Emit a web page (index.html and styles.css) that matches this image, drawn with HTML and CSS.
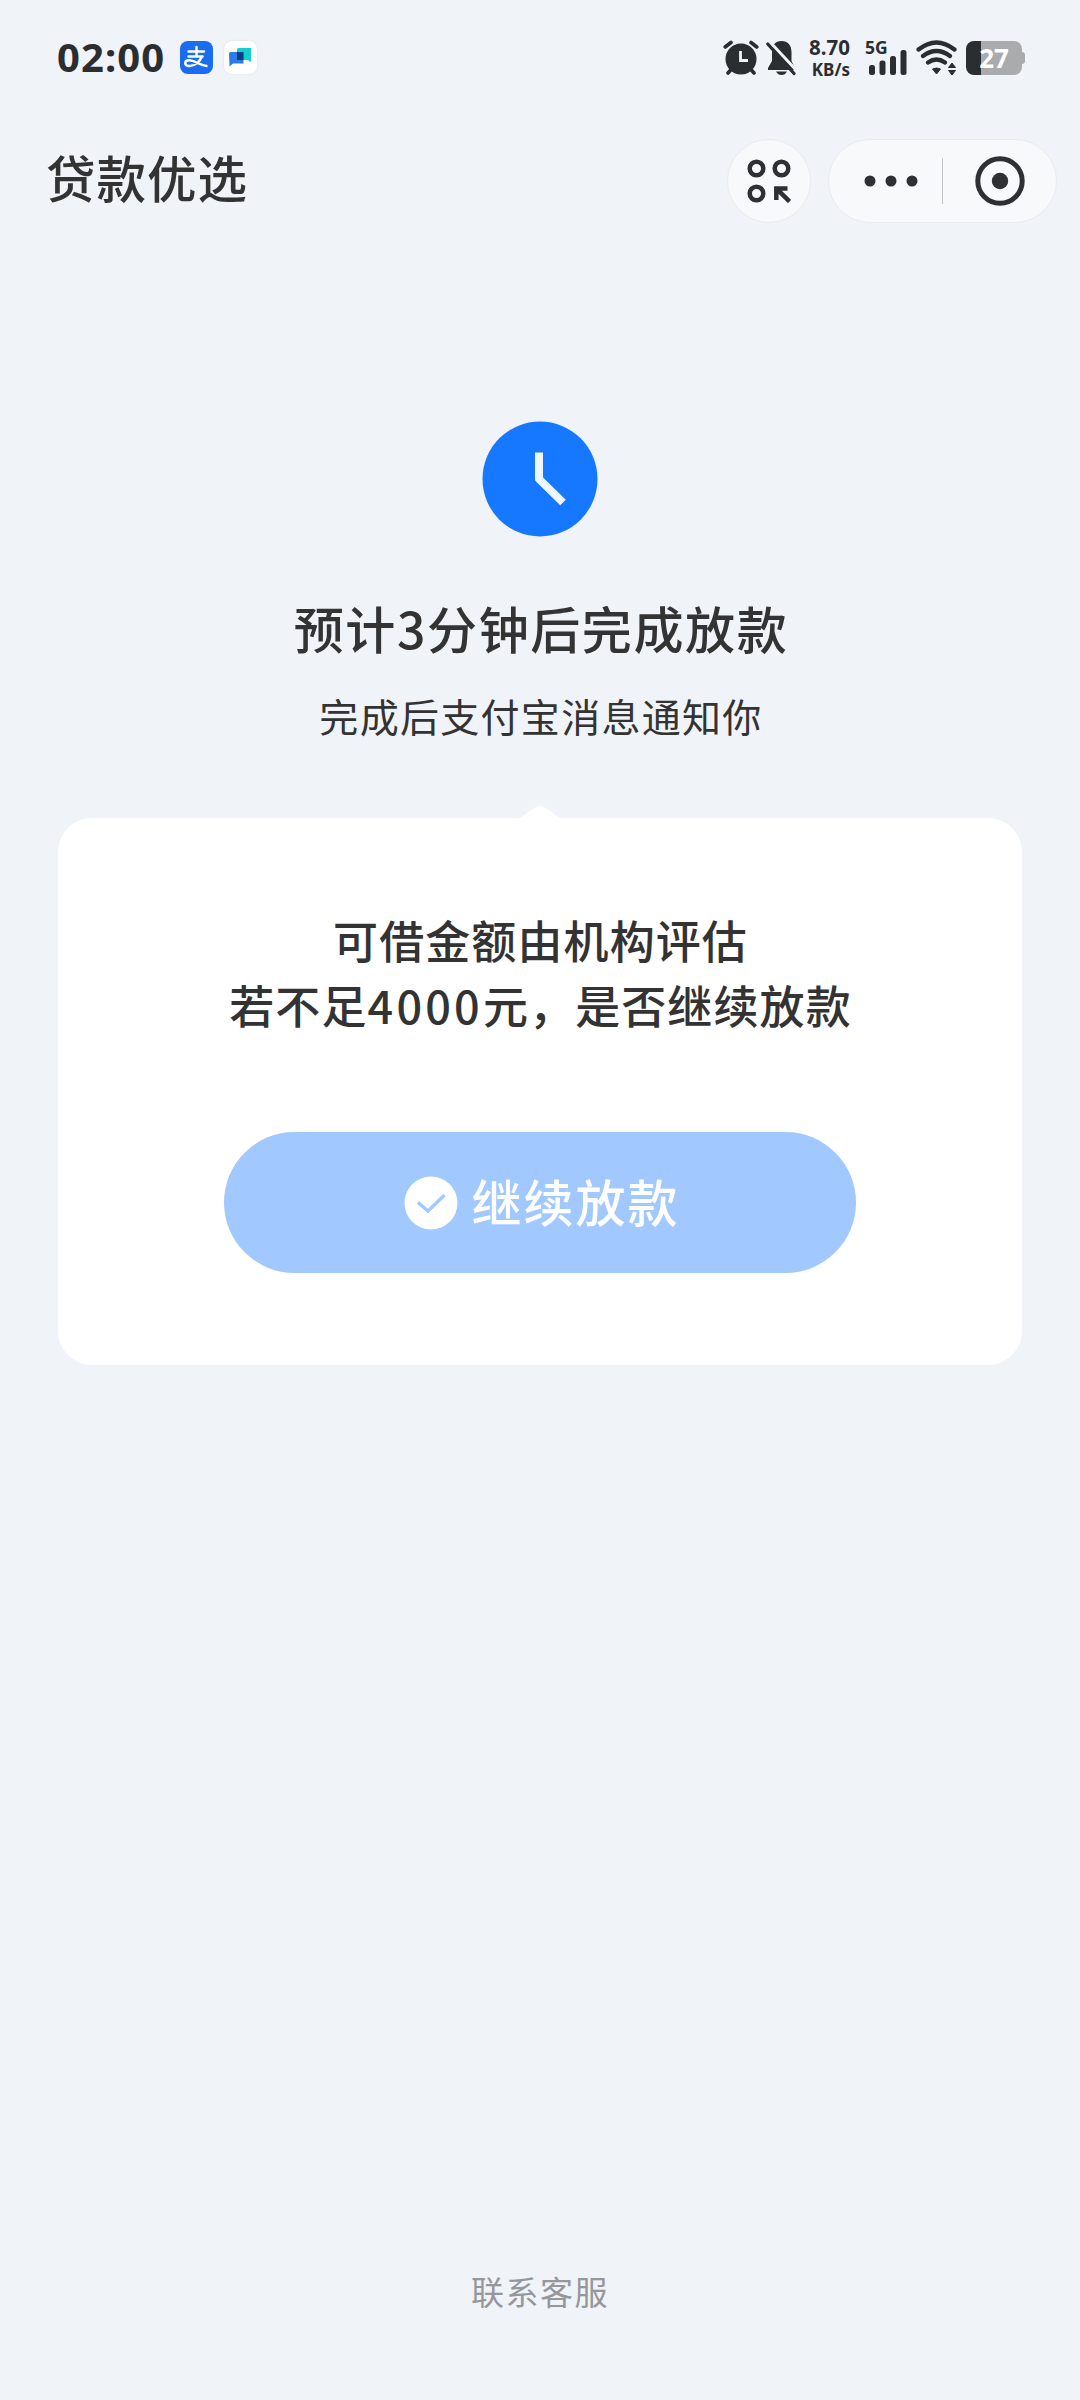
FILE: index.html
```html
<!DOCTYPE html>
<html lang="zh-CN">
<head>
<meta charset="utf-8">
<title>贷款优选</title>
<link rel="stylesheet" href="styles.css">
</head>
<body>
<div class="screen">
  <div class="status">
    <span class="time">02:00</span>
    <span class="app app-pay">
      <svg width="33" height="33" viewBox="0 0 33 33" fill="none" stroke="#fff" stroke-linecap="round">
        <path d="M8.500 10.500H24M16.500 6V15M8.500 15.500H22.500" stroke-width="2.400"/>
        <path d="M22 15.500C20 20 15 25.500 9 25C4 24.500 4 19.500 9 19.300C14 19.200 19 23.500 26.500 25" stroke-width="2.500"/>
      </svg>
    </span>
    <span class="app app-chat">
      <svg width="33" height="33" viewBox="0 0 33 33">
        <path d="M13 8.500Q13 7 14.500 7H27V21L23.500 19H13Z" fill="#12cfd0"/>
        <path d="M5 12.500Q5 11 6.500 11H19.500V22.500H9L5.500 25.500Z" fill="#2b7ce9"/>
        <path d="M13 11H19.500V19H13Z" fill="#063f87"/>
      </svg>
    </span>
    <svg class="alarm" width="36" height="36" viewBox="0 0 36 36">
      <g stroke="#2b2e30" stroke-width="3.600" stroke-linecap="round" fill="none">
        <path d="M2.200 7L8 2.500M28 2.500L33.800 7M5 33L9 28.500M31 33L27 28.500"/>
      </g>
      <circle cx="18" cy="19" r="15.500" fill="#2b2e30"/>
      <path d="M17.500 11V20.500H25" stroke="#f0f3f8" stroke-width="2.800" fill="none"/>
    </svg>
    <svg class="bell" width="31" height="36" viewBox="0 0 31 36">
      <path d="M15.500 1C22 1 25.500 5.500 25.500 12V21L29 28V30H2V28L6 21V12C6 5.500 9 1 15.500 1Z" fill="#2b2e30"/>
      <path d="M10 31.500H21Q19 35 15.500 35Q12 35 10 31.500Z" fill="#2b2e30"/>
      <path d="M3.500 1.500L31 31" stroke="#f0f3f8" stroke-width="3"/>
      <path d="M1.800 4L28 33.500" stroke="#2b2e30" stroke-width="3.200" stroke-linecap="round"/>
    </svg>
    <span class="rate"><b>8.70</b><b class="unit">KB/s</b></span>
    <span class="signal">
      <b>5G</b>
      <svg width="39" height="34" viewBox="0 0 39 34" fill="#2b2e30">
        <rect x="1" y="24" width="6" height="10" rx="2.500"/><rect x="11.500" y="19.500" width="6" height="14.500" rx="2.500"/>
        <rect x="22" y="15" width="6" height="19" rx="2.500"/><rect x="32.500" y="9" width="6" height="25" rx="2.500"/>
      </svg>
    </span>
    <svg class="wifi" width="42" height="36" viewBox="0 0 42 36">
      <g fill="none" stroke="#2b2e30" stroke-width="4.200" stroke-linecap="round">
        <path d="M2.500 9.500Q20.500-4.500 38.500 9.500M7 16Q20.500 6 34 16M12 22.500Q20.500 16.500 29 22.500"/>
      </g>
      <path d="M16.500 29Q20.500 27 24.500 29L20.500 34ZM32.500 27.500L36 23L39.500 27.500ZM32.500 30.500L36 35L39.500 30.500Z" fill="#2b2e30" stroke="#2b2e30" stroke-linejoin="round"/>
    </svg>
    <span class="battery"><b>27</b></span>
  </div>

  <div class="nav">
    <h1 class="nav-title">贷款优选</h1>
    <div class="nav-round">
      <svg width="44" height="44" viewBox="0 0 44 44" fill="none" stroke="#2e3033" stroke-width="4.500">
        <circle cx="9.500" cy="9.500" r="6.800"/><circle cx="34.500" cy="9.500" r="6.800"/><circle cx="9.500" cy="34.500" r="6.800"/>
        <path d="M40.500 29.500H29.300V41M29.500 29.700L42.500 42.500"/>
      </svg>
    </div>
    <div class="nav-pill">
      <svg class="dots" width="54" height="12" viewBox="0 0 54 12" fill="#2e3033">
        <circle cx="6" cy="6" r="5.500"/><circle cx="27" cy="6" r="5.500"/><circle cx="48" cy="6" r="5.500"/>
      </svg>
      <i class="divider"></i>
      <svg class="close" width="50" height="50" viewBox="0 0 50 50">
        <circle cx="25" cy="25" r="22.200" fill="none" stroke="#2e3033" stroke-width="5"/><circle cx="25" cy="25" r="8.200" fill="#2e3033"/>
      </svg>
    </div>
  </div>

  <div class="result">
    <svg class="clock" width="116" height="116" viewBox="0 0 116 116">
      <circle cx="58" cy="58" r="57.500" fill="#1677ff"/>
      <path d="M57 31.500V58L81 81.500" fill="none" stroke="#f0f6ff" stroke-width="8" stroke-linejoin="round"/>
    </svg>
    <h2 class="headline">预计3分钟后完成放款</h2>
    <p class="subline">完成后支付宝消息通知你</p>
  </div>

  <div class="card">
    <svg class="notch" width="52" height="13" viewBox="0 0 52 13"><path d="M0 13C7 13 9 9 21 1.500Q26-1.500 31 1.500C43 9 45 13 52 13Z" fill="#fff"/></svg>
    <p class="question">可借金额由机构评估<br>若不足<span class="amount">4000</span>元，是否继续放款</p>
    <button class="confirm">
      <svg width="54" height="54" viewBox="0 0 54 54">
        <circle cx="27" cy="27" r="26.500" fill="#fff"/>
        <path d="M14 26.500L24 35L40.500 19" fill="none" stroke="#a1c8ff" stroke-width="3.200"/>
      </svg>
      <span class="confirm-label">继续放款</span>
    </button>
  </div>

  <a class="service">联系客服</a>
</div>
</body>
</html>
```
FILE: styles.css
```css
* { box-sizing: border-box; margin: 0; padding: 0; }
body {
  background: #f0f3f8;
  color: #333;
  font-family: "Noto Sans CJK SC", sans-serif;
}
svg { display: block; flex: none; }
.screen {
  width: 1080px;
  height: 2400px;
  display: flex;
  flex-direction: column;
  overflow: hidden;
}

/* status bar */
.status {
  height: 116px;
  padding: 0 56px 0 57px;
  display: flex;
  align-items: center;
  color: #2b2e30;
  font-family: "Noto Sans", sans-serif;
}
.time { width: 123px; margin-top: -2px; font-size: 40px; font-weight: 700; letter-spacing: 1.1px; line-height: 40px; white-space: nowrap; }
.app { width: 33px; height: 33px; border-radius: 8px; flex: none; margin-top: -1px; }
.app-pay { background: #1a6cf0; }
.app-chat { background: #fff; margin-left: 11px; box-shadow: 0 0 2px #d8dade; }
.alarm { margin-left: auto; margin-top: -1px; }
.bell { margin: -1px 0 0 7px; }
.rate { width: 42px; margin: -1px 0 0 11px; display: flex; flex-direction: column; align-items: flex-end; font-size: 20.500px; line-height: 24px; white-space: nowrap; }
.rate .unit { font-size: 17px; line-height: 22px; }
.signal { position: relative; margin: -1px 0 0 16px; padding-left: 2px; }
.signal b { position: absolute; left: -1px; top: -4px; font-size: 17.500px; line-height: 20px; }
.wifi { margin: -1px 0 0 9px; }
.battery {
  width: 56px;
  height: 34px;
  margin: -1px 2px 0 8px;
  border-radius: 8px;
  background: linear-gradient(90deg, #2b2e30 15px, #a9abad 15px);
  position: relative;
  display: flex;
  align-items: center;
  justify-content: center;
}
.battery::after { content: ""; position: absolute; right: -3px; top: 11px; width: 4px; height: 12px; border-radius: 0 3px 3px 0; background: #a9abad; }
.battery b { color: #fff; font-size: 26px; line-height: 34px; }

/* title bar */
.nav { height: 129px; padding: 0 23px 0 46px; display: flex; align-items: center; }
.nav-title { font-size: 49.500px; font-weight: 500; letter-spacing: 1px; line-height: 72px; margin: -7px auto 0 0; }
.nav-round, .nav-pill { height: 84px; background: #f8f9fb; border: 1px solid #e9ebef; display: flex; align-items: center; }
.nav-round { width: 84px; border-radius: 50%; justify-content: center; }
.nav-pill { width: 229px; margin-left: 17px; border-radius: 42px; padding-left: 35px; }
.divider { width: 1px; height: 46px; margin-left: 24px; background: #c2c4c7; }
.close { margin-left: 32px; }

/* loan progress */
.result { display: flex; flex-direction: column; align-items: center; padding-top: 176px; height: 573px; }
.headline { margin-top: 53px; font-size: 50px; font-weight: 500; letter-spacing: 1.600px; line-height: 74px; }
.subline { margin-top: 23px; font-size: 39px; letter-spacing: 1.300px; line-height: 56px; }
.headline, .subline { padding-left: 2px; }

.card {
  position: relative;
  height: 547px;
  margin: 0 58px;
  padding-top: 89px;
  border-radius: 34px;
  background: #fff;
  display: flex;
  flex-direction: column;
  align-items: center;
}
.notch { position: absolute; top: -12px; left: 456px; }
.question { padding-left: 1px; font-size: 45px; font-weight: 500; letter-spacing: 1.100px; line-height: 65px; text-align: center; }
.amount { letter-spacing: 3.200px; }
.confirm {
  width: 632px;
  height: 141px;
  margin-top: 95px;
  padding-left: 3px;
  border: 0;
  border-radius: 71px;
  background: #a1c8ff;
  color: #fff;
  font: 500 50px/72px "Noto Sans CJK SC", sans-serif;
  letter-spacing: 2px;
  display: flex;
  align-items: center;
  justify-content: center;
  gap: 14px;
}
.confirm-label { margin-top: -6px; }

.service { margin: auto auto 85px; color: #95979b; font-size: 33px; letter-spacing: 1.500px; line-height: 48px; }
```
